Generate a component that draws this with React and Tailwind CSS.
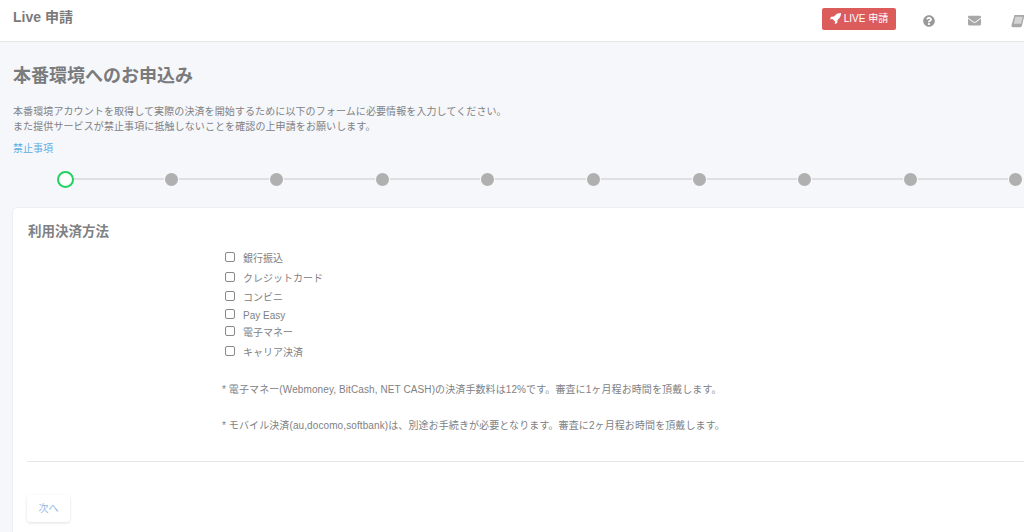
import { FaQuestionCircle, FaEnvelope } from "react-icons/fa";

const methods = [
  { label: "銀行振込", h: "h-[20px]" },
  { label: "クレジットカード", h: "h-[19px]" },
  { label: "コンビニ", h: "h-[18px]" },
  { label: "Pay Easy", h: "h-[17px]" },
  { label: "電子マネー", h: "h-[20px]" },
  { label: "キャリア決済", h: "h-[20px]" },
];

const steps = [1, 2, 3, 4, 5, 6, 7, 8, 9];

// FontAwesome 4 style glyphs, react-icons only has the newer shapes
function RocketIcon() {
  return (
    <svg width="11" height="11" viewBox="0 0 16 16" fill="currentColor">
      <path d="M16 0c-4.500 0-7.600 1.600-10 5L1.500 5.500 0 9l3.500-.3 3.800 3.800-.3 3.500 3.500-1.500.5-4.500C14.400 7.600 16 4.500 16 0z" />
    </svg>
  );
}

function BookIcon() {
  return (
    <svg width="14" height="14" viewBox="0 0 16 16" className="text-[#a8a8a8]">
      <path fill="currentColor" d="M4 1h11.500L12.500 13.500c-.3 1-.9 1.500-2 1.500H2.500C1 15 .2 14 .6 12.500z" />
      <path fill="#d4d4d4" d="M5 3h8.500l-2 8H3.200z" />
    </svg>
  );
}

export default function App() {
  return (
    <div className="h-[532px] w-[1024px] overflow-hidden bg-[#f5f7fb] font-['Liberation_Sans','Noto_Sans_CJK_JP',sans-serif] text-[#808184]">
      <header className="flex h-[42px] w-[1100px] items-center justify-between border-b border-[#e6e6e6] bg-white pl-[13px]">
        <h1 className="mb-[7px] text-[14px] font-bold leading-none text-[#7a7a7a]">Live 申請</h1>
        <div className="mb-[4px] flex items-center">
          <button className="mr-[27px] flex h-[22px] w-[74px] items-center justify-center gap-[3px] rounded-[2px] bg-[#dc5c5c] text-[10px] text-white">
            <RocketIcon />
            LIVE 申請
          </button>
          <FaQuestionCircle size={12} className="mr-[33px] mt-[4px] text-[#999]" />
          <FaEnvelope size={13} className="mr-[30px] mt-[4px] text-[#a8a8a8]" />
          <div className="mr-[75px] mt-[4px]">
            <BookIcon />
          </div>
        </div>
      </header>

      <main className="w-[1200px] pl-[13px]">
        <h2 className="mt-[22px] text-[18px] font-bold leading-[24px] text-[#7a7b7d]">本番環境へのお申込み</h2>
        <p className="mt-[16px] text-[10px] leading-[15px] tracking-[0.1px]">
          本番環境アカウントを取得して実際の決済を開始するために以下のフォームに必要情報を入力してください。
          <br />
          また提供サービスが禁止事項に抵触しないことを確認の上申請をお願いします。
        </p>
        <a className="mt-[7px] block text-[10px] leading-[15px] text-[#5dade2]">禁止事項</a>

        <div className="ml-[44px] mt-[14px] flex h-[18px] items-center">
          <span className="z-10 -mr-[1px] h-[17px] w-[17px] shrink-0 rounded-full border-2 border-[#22d15f] bg-white" />
          {steps.map((s) => (
            <div key={s} className="flex items-center">
              <span className="h-[2px] w-[90.6px] bg-[#dfdfdf]" />
              <span className="h-[15px] w-[15px] shrink-0 rounded-full border border-white bg-[#b0b0b0]" />
            </div>
          ))}
        </div>

        <section className="mt-[20px] h-[400px] rounded-[4px] bg-white pl-[14px] pt-[15px] shadow-[0_0_2px_rgba(0,0,0,0.12)]">
          <h3 className="pl-[1px] text-[13.5px] font-bold leading-[17px]">利用決済方法</h3>
          <div className="ml-[198px] mt-[9px] w-[700px]">
            {methods.map((m) => (
              <label key={m.label} className={`flex items-start text-[10px] ${m.h}`}>
                <input type="checkbox" className="mr-[8px] mt-[3px] h-[10px] w-[10px] appearance-none rounded-[2px] border border-[#888] bg-white" />
                <span className="leading-[20px]">{m.label}</span>
              </label>
            ))}
            <p className="-ml-[3px] mt-[19px] text-[10px] leading-[15px] tracking-[0.1px]">* 電子マネー(Webmoney, BitCash, NET CASH)の決済手数料は12%です。審査に1ヶ月程お時間を頂戴します。</p>
            <p className="-ml-[3px] mt-[21px] text-[10px] leading-[15px] tracking-[0.1px]">* モバイル決済(au,docomo,softbank)は、別途お手続きが必要となります。審査に2ヶ月程お時間を頂戴します。</p>
          </div>
          <hr className="mt-[28px] border-[#e6e6e6]" />
          <button className="mt-[33px] h-[27px] w-[43px] rounded-[3px] bg-white text-[10px] text-[#8fb8e8] shadow-[0_1px_3px_rgba(0,0,0,0.12)]">次へ</button>
        </section>
      </main>
    </div>
  );
}
